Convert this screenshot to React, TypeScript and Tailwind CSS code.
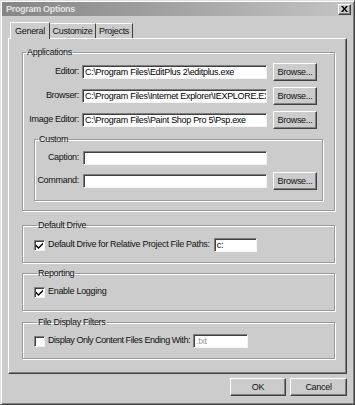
import { ReactNode } from 'react';

const raised =
  'border border-t-white border-l-white border-r-[#404040] border-b-[#404040] shadow-[inset_-1px_-1px_0_#808080]';
const sunken =
  'border border-t-[#808080] border-l-[#808080] border-r-[#f4f4f4] border-b-[#f4f4f4] shadow-[inset_1px_1px_0_#404040]';

const TextBox = ({ value = '', width, disabled = false }: { value?: string; width: string; disabled?: boolean }) => (
  <div
    className={`${width} h-[14px] bg-white ${sunken} px-[2px] leading-[12px] whitespace-nowrap overflow-hidden ${
      disabled ? 'text-[#9a9a9a]' : 'text-black'
    }`}
  >
    {value}
  </div>
);

const Button = ({ label, width = 'w-[44px]' }: { label: string; width?: string }) => (
  <div className={`${width} h-[18px] ${raised} bg-[#cccccc] flex items-center justify-center leading-none`}>
    {label}
  </div>
);

const CheckBox = ({ checked }: { checked: boolean }) => (
  <div className={`w-[11px] h-[11px] bg-white ${sunken} flex items-center justify-center`}>
    {checked && (
      <svg width="7" height="7" viewBox="0 0 7 7">
        <path d="M0 2.5 L2.5 5 L7 0.5 L7 2.5 L2.5 7 L0 4.5 Z" fill="#000" />
      </svg>
    )}
  </div>
);

const Group = ({ title, className, children }: { title: string; className: string; children: ReactNode }) => (
  <fieldset className={`border border-[#9a9a9a] shadow-[inset_1px_1px_0_#fff,1px_1px_0_#fff] ${className}`}>
    <legend className="ml-[3px] px-[1px] leading-[12px]">{title}</legend>
    {children}
  </fieldset>
);

const PathRow = ({ label, value }: { label: string; value: string }) => (
  <div className="flex items-center h-[18px]">
    <span className="w-[56px] text-right whitespace-nowrap">{label}</span>
    <div className="ml-[3px]">
      <TextBox value={value} width="w-[185px]" />
    </div>
    <div className="ml-[6px]">
      <Button label="Browse..." />
    </div>
  </div>
);

export default function App() {
  return (
    <div className="w-[355px] h-[405px] bg-[#cccccc] text-[#111] text-[9px] tracking-[-0.3px] font-['Liberation_Sans',Arial,sans-serif] border border-t-[#e0e0e0] border-l-[#e0e0e0] border-r-[#404040] border-b-[#404040] shadow-[inset_1px_1px_0_#fff,inset_-1px_-1px_0_#808080] p-[1px] flex flex-col">
      {/* title bar */}
      <div className="h-[14px] flex items-center justify-between pl-[4px] pr-[2px] bg-gradient-to-r from-[#858585] to-[#c4c4c4]">
        <span className="font-bold text-[#e4e4e4] leading-none">Program Options</span>
        <div className={`w-[13px] h-[11px] ${raised} bg-[#cccccc] flex items-center justify-center`}>
          <svg width="7" height="6" viewBox="0 0 7 6">
            <path d="M0 0 L2 0 L3.5 2 L5 0 L7 0 L4.5 3 L7 6 L5 6 L3.5 4 L2 6 L0 6 L2.5 3 Z" fill="#000" />
          </svg>
        </div>
      </div>

      <div className="pl-[6px] pr-[6px] pt-[5px]">
        {/* tabs */}
        <div className="flex items-end pl-[2px] h-[17px]">
          <div className="relative z-10 w-[40px] h-[17px] -mb-[1px] bg-[#cccccc] border-t border-l border-r border-t-white border-l-white border-r-[#404040] leading-[14px] pt-[1px] text-center">
            General
          </div>
          <div className="w-[46px] h-[15px] border-t border-r border-t-white border-r-[#404040] leading-[14px] text-center">
            Customize
          </div>
          <div className="w-[37px] h-[15px] border-t border-r border-t-white border-r-[#404040] leading-[14px] text-center">
            Projects
          </div>
        </div>

        {/* panel */}
        <div className={`h-[336px] ${raised} pt-[7px] pl-[13px] pr-[11px] flex flex-col`}>
          <Group title="Applications" className="h-[165px]">
            <div className="flex flex-col gap-[6px] mt-[5px]">
              <PathRow label="Editor:" value="C:\Program Files\EditPlus 2\editplus.exe" />
              <PathRow label="Browser:" value="C:\Program Files\Internet Explorer\IEXPLORE.EXE" />
              <PathRow label="Image Editor:" value="C:\Program Files\Paint Shop Pro 5\Psp.exe" />
            </div>
            <div className="ml-[11px] mt-[4px] w-[289px]">
              <Group title="Custom" className="h-[68px]">
                <div className="flex flex-col gap-[5px] mt-[4px]">
                  <div className="flex items-center h-[18px]">
                    <span className="w-[44px] text-right">Caption:</span>
                    <div className="ml-[4px]">
                      <TextBox width="w-[184px]" />
                    </div>
                  </div>
                  <div className="flex items-center h-[18px]">
                    <span className="w-[44px] text-right">Command:</span>
                    <div className="ml-[4px]">
                      <TextBox width="w-[184px]" />
                    </div>
                    <div className="ml-[6px]">
                      <Button label="Browse..." />
                    </div>
                  </div>
                </div>
              </Group>
            </div>
          </Group>

          <Group title="Default Drive" className="h-[44px] mt-[8px] pl-[11px]">
            <div className="flex items-center h-[18px] mt-[5px]">
              <CheckBox checked />
              <span className="ml-[3px] whitespace-nowrap">Default Drive for Relative Project File Paths:</span>
              <div className="ml-[4px]">
                <TextBox value="c:" width="w-[43px]" />
              </div>
            </div>
          </Group>

          <Group title="Reporting" className="h-[44px] mt-[4px] pl-[11px]">
            <div className="flex items-center h-[18px] mt-[4px]">
              <CheckBox checked />
              <span className="ml-[3px]">Enable Logging</span>
            </div>
          </Group>

          <Group title="File Display Filters" className="h-[43px] mt-[5px] pl-[11px]">
            <div className="flex items-center h-[18px] mt-[4px]">
              <CheckBox checked={false} />
              <span className="ml-[3px] whitespace-nowrap tracking-[-0.45px]">Display Only Content Files Ending With:</span>
              <div className="ml-[3px]">
                <TextBox value=".txt" width="w-[55px]" disabled />
              </div>
            </div>
          </Group>
        </div>

        {/* dialog buttons */}
        <div className="flex justify-end gap-[4px] mt-[4px]">
          <Button label="OK" width="w-[56px]" />
          <Button label="Cancel" width="w-[57px]" />
        </div>
      </div>
    </div>
  );
}
